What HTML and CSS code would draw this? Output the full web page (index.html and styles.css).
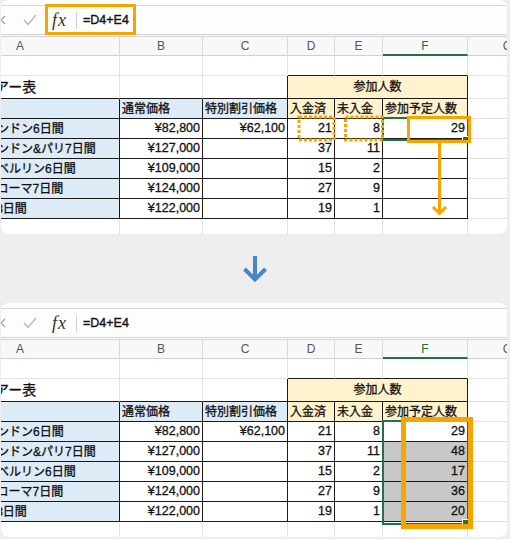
FILE: index.html
```html
<!DOCTYPE html>
<html lang="ja">
<head>
<meta charset="utf-8">
<title>Excel fill down</title>
<link rel="stylesheet" href="styles.css">
</head>
<body>
<div class="panel">
  <div class="fbar">
    <svg class="xic" width="10" height="10" viewBox="0 0 10 10"><path d="M1 1L9 9M9 1L1 9" stroke="#9a9a9a" stroke-width="1.2" fill="none"/></svg>
    <svg class="chk" width="14" height="12" viewBox="0 0 14 12"><polyline points="1,6 5,10.5 13,1" stroke="#b8b8b8" stroke-width="1.4" fill="none"/></svg>
    <span class="fx">fx</span>
    <span class="sep"></span>
    <span class="ftext">=D4+E4</span>
  </div>
  <div class="sheet">
    <div class="c h">A</div><div class="c h">B</div><div class="c h">C</div><div class="c h">D</div><div class="c h">E</div><div class="c h hsel">F</div><div class="c h">G</div>

    <div class="c"></div><div class="c"></div><div class="c"></div><div class="c bb"></div><div class="c bb"></div><div class="c bb"></div><div class="c"></div>

    <div class="c bb title">欧州旅行ツアー表</div><div class="c bb"></div><div class="c bb br"></div><div class="c bk yel ctr span3">参加人数</div><div class="c"></div>

    <div class="c bk blue"></div><div class="c bk blue">通常価格</div><div class="c bk blue">特別割引価格</div><div class="c bk yel">入金済</div><div class="c bk yel">未入金</div><div class="c bk yel">参加予定人数</div><div class="c"></div>

    <div class="c bk blue tour">イギリス・ロンドン6日間</div><div class="c bk num">¥82,800</div><div class="c bk num">¥62,100</div><div class="c bk num">21</div><div class="c bk num">8</div><div class="c bk num">29</div><div class="c"></div>

    <div class="c bk blue tour">イギリス・ロンドン&amp;パリ7日間</div><div class="c bk num">¥127,000</div><div class="c bk num"></div><div class="c bk num">37</div><div class="c bk num">11</div><div class="c bk num"></div><div class="c"></div>

    <div class="c bk blue tour">ドイツ・首都ベルリン6日間</div><div class="c bk num">¥109,000</div><div class="c bk num"></div><div class="c bk num">15</div><div class="c bk num">2</div><div class="c bk num"></div><div class="c"></div>

    <div class="c bk blue tour">イタリア古都ローマ7日間</div><div class="c bk num">¥124,000</div><div class="c bk num"></div><div class="c bk num">27</div><div class="c bk num">9</div><div class="c bk num"></div><div class="c"></div>

    <div class="c bk blue tour">スペイン周遊8日間</div><div class="c bk num">¥122,000</div><div class="c bk num"></div><div class="c bk num">19</div><div class="c bk num">1</div><div class="c bk num"></div><div class="c"></div>

    <div class="c"></div><div class="c"></div><div class="c"></div><div class="c"></div><div class="c"></div><div class="c"></div><div class="c"></div>
  </div>

  <div class="selbox selbox-one"></div>
  <div class="handle handle-one"></div>
  <svg class="ann-svg" width="506" height="234" viewBox="0 0 506 234">
    <rect x="298" y="117" width="35" height="23" fill="none" stroke="#f6a500" stroke-width="3" stroke-dasharray="3 2"/>
    <rect x="344.5" y="117" width="37" height="23" fill="none" stroke="#f6a500" stroke-width="3" stroke-dasharray="3 2"/>
    <line x1="438.5" y1="142" x2="438.5" y2="213" stroke="#f6a500" stroke-width="3"/>
    <polyline points="432,207 438.5,213.5 445,207" fill="none" stroke="#f6a500" stroke-width="3"/>
  </svg>
  <div class="ann-cell"></div>
  <div class="ann-formula"></div>
</div>

<div class="between">
  <svg class="down" width="26" height="28" viewBox="0 0 26 28"><line x1="13" y1="0" x2="13" y2="23" stroke="#4a86c5" stroke-width="4"/><polyline points="2.5,13 13,23.5 23.5,13" fill="none" stroke="#4a86c5" stroke-width="4"/></svg>
</div>

<div class="panel">
  <div class="fbar">
    <svg class="xic" width="10" height="10" viewBox="0 0 10 10"><path d="M1 1L9 9M9 1L1 9" stroke="#9a9a9a" stroke-width="1.2" fill="none"/></svg>
    <svg class="chk" width="14" height="12" viewBox="0 0 14 12"><polyline points="1,6 5,10.5 13,1" stroke="#b8b8b8" stroke-width="1.4" fill="none"/></svg>
    <span class="fx">fx</span>
    <span class="sep"></span>
    <span class="ftext">=D4+E4</span>
  </div>
  <div class="sheet">
    <div class="c h">A</div><div class="c h">B</div><div class="c h">C</div><div class="c h">D</div><div class="c h">E</div><div class="c h hsel">F</div><div class="c h">G</div>

    <div class="c"></div><div class="c"></div><div class="c"></div><div class="c bb"></div><div class="c bb"></div><div class="c bb"></div><div class="c"></div>

    <div class="c bb title">欧州旅行ツアー表</div><div class="c bb"></div><div class="c bb br"></div><div class="c bk yel ctr span3">参加人数</div><div class="c"></div>

    <div class="c bk blue"></div><div class="c bk blue">通常価格</div><div class="c bk blue">特別割引価格</div><div class="c bk yel">入金済</div><div class="c bk yel">未入金</div><div class="c bk yel">参加予定人数</div><div class="c"></div>

    <div class="c bk blue tour">イギリス・ロンドン6日間</div><div class="c bk num">¥82,800</div><div class="c bk num">¥62,100</div><div class="c bk num">21</div><div class="c bk num">8</div><div class="c bk num">29</div><div class="c"></div>

    <div class="c bk blue tour">イギリス・ロンドン&amp;パリ7日間</div><div class="c bk num">¥127,000</div><div class="c bk num"></div><div class="c bk num">37</div><div class="c bk num">11</div><div class="c bk num gray">48</div><div class="c"></div>

    <div class="c bk blue tour">ドイツ・首都ベルリン6日間</div><div class="c bk num">¥109,000</div><div class="c bk num"></div><div class="c bk num">15</div><div class="c bk num">2</div><div class="c bk num gray">17</div><div class="c"></div>

    <div class="c bk blue tour">イタリア古都ローマ7日間</div><div class="c bk num">¥124,000</div><div class="c bk num"></div><div class="c bk num">27</div><div class="c bk num">9</div><div class="c bk num gray">36</div><div class="c"></div>

    <div class="c bk blue tour">スペイン周遊8日間</div><div class="c bk num">¥122,000</div><div class="c bk num"></div><div class="c bk num">19</div><div class="c bk num">1</div><div class="c bk num gray">20</div><div class="c"></div>

    <div class="c"></div><div class="c"></div><div class="c"></div><div class="c"></div><div class="c"></div><div class="c"></div><div class="c"></div>
  </div>

  <div class="selbox selbox-two"></div>
  <div class="handle handle-two"></div>
  <div class="ann-range"></div>
</div>
</body>
</html>
```

FILE: styles.css
```css
* { box-sizing: border-box; }

body {
  margin: 0;
  background: #eeeeee;
  font-family: "Liberation Sans", "Noto Sans CJK JP", sans-serif;
  color: #111;
}

.panel {
  position: relative;
  width: 506px;
  height: 234px;
  margin-left: 1px;
  background: #ffffff;
  border-radius: 8px;
  overflow: hidden;
}

/* formula bar */
.fbar {
  margin-top: 5px;
  height: 32px;
  border-top: 1px solid #d9d9d9;
  border-bottom: 3px double #d2d2d2;
  display: flex;
  align-items: center;
  background: #fdfdfd;
}
.xic { margin-left: -5px; flex: none; }
.chk { margin-left: 17px; flex: none; }
.fx {
  margin-left: 15px;
  width: 18px;
  font-family: "Liberation Serif", serif;
  font-style: italic;
  font-size: 18px;
  line-height: 1;
  color: #333;
  letter-spacing: 1px;
}
.sep {
  margin-left: 6px;
  width: 1px;
  height: 17px;
  background: #d0d0d0;
}
.ftext {
  margin-left: 6px;
  font-size: 12.5px;
  color: #111;
  -webkit-text-stroke: 0.35px #111;
}

/* sheet grid */
.sheet {
  display: grid;
  grid-template-columns: 199px 83px 85px 47px 48px 85px 80px;
  grid-template-rows: 19px 20px 23px 20px repeat(6, 20px);
  margin-left: -80px;
  width: 627px;
  font-size: 12px;
  line-height: 1;
}
.c {
  border-right: 1px solid #e2e2e2;
  border-bottom: 1px solid #e2e2e2;
  display: flex;
  align-items: center;
  padding: 0 2px;
  white-space: nowrap;
  overflow: hidden;
  -webkit-text-stroke: 0.3px #111;
}
.h {
  justify-content: center;
  background: #f8f8f8;
  border-right-color: #dadada;
  border-bottom-color: #d0d0d0;
  color: #555;
  font-size: 12px;
  -webkit-text-stroke: 0;
}
.hsel {
  border-bottom: 2px solid #217346;
  color: #1d6b44;
}
.bb { border-bottom-color: #1a1a1a; }
.br { border-right-color: #1a1a1a; }
.bk { border-right-color: #1a1a1a; border-bottom-color: #1a1a1a; }
.blue { background: #ddebf7; }
.yel { background: #fff2cc; }
.gray { background: #c8c8c8; }
.num { justify-content: flex-end; padding-right: 2px; font-size: 12.5px; }
.ctr { justify-content: center; }
.span3 { grid-column: span 3; }
.title { font-size: 14px; padding-left: 4px; }
.tour { padding-left: 4px; }

/* annotations and selection overlays */
.selbox {
  position: absolute;
  left: 381px;
  top: 117px;
  width: 87px;
  border: 2px solid #217346;
}
.selbox-one { height: 24px; }
.selbox-two { height: 105px; }
.handle {
  position: absolute;
  width: 7px;
  height: 7px;
  background: #217346;
  border: 1px solid #fff;
}
.handle-one { left: 461px; top: 136px; }
.handle-two { left: 461px; top: 216px; }

.ann-svg {
  position: absolute;
  left: 0;
  top: 0;
}
.ann-cell {
  position: absolute;
  left: 406px;
  top: 116px;
  width: 64px;
  height: 27px;
  border: 3px solid #f6a500;
}
.ann-formula {
  position: absolute;
  left: 44px;
  top: 4px;
  width: 91px;
  height: 31px;
  border: 3px solid #f6a500;
}
.ann-range {
  position: absolute;
  left: 400px;
  top: 114px;
  width: 72px;
  height: 112px;
  border: 5px solid #f6a500;
}

.between {
  height: 69px;
  display: flex;
  justify-content: center;
  padding-top: 22px;
}
.down { display: block; }
```
